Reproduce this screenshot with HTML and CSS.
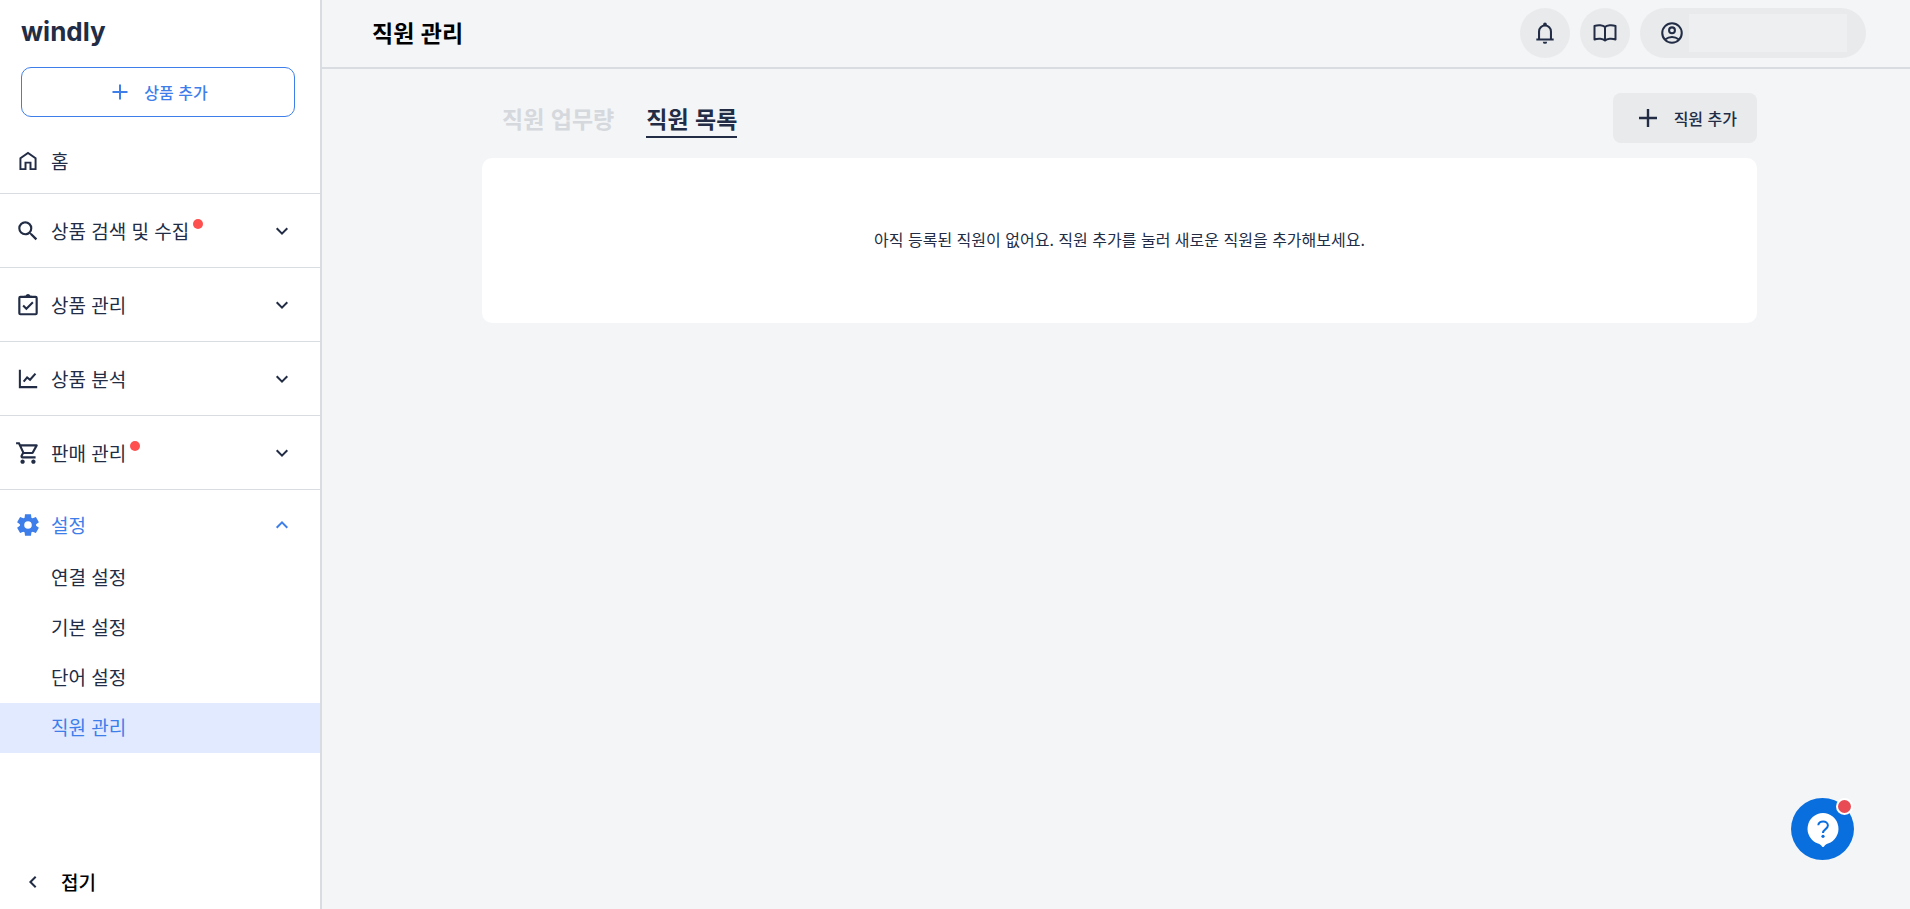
FILE: index.html
```html
<!DOCTYPE html>
<html lang="ko">
<head>
    <meta charset="utf-8">
    <meta name="viewport" content="width=device-width, initial-scale=1">
    <title>직원 관리</title>
    <link rel="stylesheet" href="styles.css">
</head>
<body>
<aside class="sidebar">
    <a class="logo" href="#">windly</a>
    <button class="add-product">
        <svg width="24" height="24" viewBox="0 0 24 24"><path d="M12 4.500v15M4.500 12h15" stroke="currentColor" stroke-width="2" fill="none"/></svg>
        상품 추가
    </button>
    <nav class="menu">
        <a class="menu-item home" href="#">
            <svg class="icon" viewBox="0 0 24 24"><path d="M5 19.500V9.500L12 4.500l7 5v10h-4.700v-6H9.700v6z" stroke="currentColor" stroke-width="1.800" fill="none"/></svg>
            홈
        </a>
        <button class="menu-item">
            <svg class="icon" viewBox="0 0 24 24"><path fill="currentColor" d="M15.500 14h-.79l-.28-.27A6.471 6.471 0 0 0 16 9.500 6.500 6.500 0 1 0 9.500 16c1.610 0 3.090-.59 4.230-1.570l.27.28v.79l5 4.990L20.490 19l-4.990-5zm-6 0C7.010 14 5 11.990 5 9.500S7.010 5 9.500 5 14 7.010 14 9.500 11.990 14 9.500 14z"/></svg>
            <span class="label">상품 검색 및 수집<i class="dot"></i></span>
            <svg class="chevron" viewBox="0 0 24 24"><path d="M6.700 9.300l5.300 5.300 5.300-5.300"/></svg>
        </button>
        <button class="menu-item">
            <svg class="icon" viewBox="0 0 24 24"><rect x="4" y="4.500" width="16" height="16" rx="1" stroke="currentColor" stroke-width="2" fill="none"/><path d="M8.500 5.500V3.500h1.300a2.300 2.300 0 0 1 4.400 0h1.300v2z" fill="currentColor"/><path d="M7.500 12.500l3 3 6-6" stroke="currentColor" stroke-width="1.900" fill="none"/></svg>
            <span class="label">상품 관리</span>
            <svg class="chevron" viewBox="0 0 24 24"><path d="M6.700 9.300l5.300 5.300 5.300-5.300"/></svg>
        </button>
        <button class="menu-item">
            <svg class="icon" viewBox="0 0 24 24"><path d="M4.500 3.500v16H20.500M8 14.500l3.200-4 2.700 2.200 5-5.700" stroke="currentColor" stroke-width="1.900" fill="none"/></svg>
            <span class="label">상품 분석</span>
            <svg class="chevron" viewBox="0 0 24 24"><path d="M6.700 9.300l5.300 5.300 5.300-5.300"/></svg>
        </button>
        <button class="menu-item">
            <svg class="icon" viewBox="0 0 24 24"><path fill="currentColor" d="M15.550 13c.75 0 1.410-.41 1.750-1.030l3.580-6.490A.996.996 0 0 0 20.010 4H5.210l-.94-2H1v2h2l3.600 7.590-1.350 2.440C4.520 15.370 5.480 17 7 17h12v-2H7l1.100-2h7.450zM6.160 6h12.150l-2.760 5H8.530L6.160 6zM7 18c-1.100 0-1.990.9-1.990 2S5.900 22 7 22s2-.9 2-2-.9-2-2-2zm10 0c-1.100 0-1.990.9-1.990 2s.89 2 1.990 2 2-.9 2-2-.9-2-2-2z"/></svg>
            <span class="label">판매 관리<i class="dot"></i></span>
            <svg class="chevron" viewBox="0 0 24 24"><path d="M6.700 9.300l5.300 5.300 5.300-5.300"/></svg>
        </button>
        <button class="menu-item open">
            <svg class="icon" viewBox="0 0 24 24"><path fill="currentColor" d="M9.250 22l-.4-3.200q-.325-.125-.612-.3t-.563-.375L4.700 19.375l-2.750-4.750 2.575-1.950Q4.500 12.500 4.500 12.338v-.675q0-.163.025-.338L1.950 9.375l2.750-4.750 2.975 1.250q.275-.2.575-.375t.6-.3l.4-3.200h5.500l.4 3.200q.325.125.613.300t.562.375l2.975-1.250 2.750 4.750-2.575 1.950q.025.175.025.338v.675q0 .162-.05.337l2.575 1.950-2.750 4.750-2.950-1.250q-.275.2-.575.375t-.6.300l-.4 3.200zM12 15.500a3.500 3.500 0 1 0 0-7 3.500 3.500 0 0 0 0 7z"/></svg>
            <span class="label">설정</span>
            <svg class="chevron" viewBox="0 0 24 24"><path d="M6.700 14.700L12 9.400l5.300 5.300"/></svg>
        </button>
        <div class="submenu">
            <a href="#">연결 설정</a>
            <a href="#">기본 설정</a>
            <a href="#">단어 설정</a>
            <a href="#" class="active">직원 관리</a>
        </div>
    </nav>
    <button class="fold">
        <svg class="chevron" viewBox="0 0 24 24"><path d="M14.700 6.700L9.400 12l5.300 5.300"/></svg>
        접기
    </button>
</aside>
<div class="page">
    <header class="topbar">
        <h1>직원 관리</h1>
        <div class="topbar-actions">
            <button class="round" aria-label="알림">
                <svg width="26" height="26" viewBox="0 0 24 24"><path d="M4 18h16M6.500 18v-7.500a5.500 5.500 0 0 1 11 0V18" stroke="currentColor" stroke-width="1.900" fill="none"/><path fill="currentColor" d="M10.300 5.500V4a1.700 1.700 0 0 1 3.400 0v1.500zM10 20h4a2 2 0 0 1-4 0z"/></svg>
            </button>
            <button class="round" aria-label="가이드">
                <svg width="26" height="26" viewBox="0 0 26 26"><path d="M13 7C11 5 6 4.700 2.500 6v13.500C6 18.200 11 18.500 13 20.500c2-2 7-2.300 10.500-1V6C20 4.700 15 5 13 7zv13.500" stroke="currentColor" stroke-width="2" stroke-linejoin="round" fill="none"/></svg>
            </button>
            <button class="account" aria-label="내 계정">
                <svg width="26" height="26" viewBox="0 0 24 24"><g stroke="currentColor" stroke-width="1.900" fill="none"><circle cx="12" cy="12" r="9"/><circle cx="12" cy="9.500" r="2.700"/><path d="M5.500 18q6.500-4.600 13 0"/></g></svg>
                <span class="account-name"></span>
            </button>
        </div>
    </header>
    <main class="content">
        <div class="content-head">
            <div class="tabs">
                <a class="tab" href="#">직원 업무량</a>
                <a class="tab selected" href="#">직원 목록</a>
            </div>
            <button class="add-staff">
                <svg width="24" height="24" viewBox="0 0 24 24"><path d="M12 3v18M3 12h18" stroke="currentColor" stroke-width="2.400" fill="none"/></svg>
                직원 추가
            </button>
        </div>
        <section class="card">
            <p>아직 등록된 직원이 없어요. 직원 추가를 눌러 새로운 직원을 추가해보세요.</p>
        </section>
    </main>
</div>
<button class="help" aria-label="도움말">
    <svg width="36" height="40" viewBox="0 0 36 40"><path fill="#fff" d="M18 4a15.700 15.700 0 0 1 5 30.500c-2 .7-3 1.700-4 3q-1 1.200-2 0c-1-1.300-2-2.300-4-3A15.700 15.700 0 0 1 18 4z"/><path d="M13.300 16.300c.2-5.200 9.600-5.300 9.600.2 0 3.700-4.900 3.500-4.900 7.600" stroke="#0a6fde" stroke-width="2" fill="none"/><circle cx="18" cy="27.300" r="1.600" fill="#0a6fde"/></svg>
    <i class="help-badge"></i>
</button>
</body>
</html>
```

FILE: styles.css
```css
:root {
    --navy: #222d45;
    --blue: #3d7eea;
    --line: #d9dce0;
    --gray: #e8eaec;
    --bg: #f3f5f7;
    --red: #ff5050;
}

* {
    box-sizing: border-box;
}

body {
    margin: 0;
    min-height: 100vh;
    display: flex;
    background: var(--bg);
    color: var(--navy);
    font-family: "Noto Sans CJK KR", "Noto Sans", sans-serif;
    font-size: 16px;
    line-height: 24px;
}

button {
    font: inherit;
    color: inherit;
    border: 0;
    background: none;
    padding: 0;
    cursor: pointer;
}

a {
    color: inherit;
    text-decoration: none;
}

svg {
    display: block;
    flex: none;
}

.sidebar {
    width: 322px;
    min-height: 100vh;
    flex: none;
    display: flex;
    flex-direction: column;
    background: #fff;
    border-right: 2px solid var(--line);
}

.logo {
    margin: 16px 21px 0;
    font-family: Inter, sans-serif;
    font-size: 26px;
    font-weight: 700;
    line-height: 32px;
}

.add-product {
    display: flex;
    align-items: center;
    justify-content: center;
    gap: 12px;
    height: 50px;
    margin: 19px 25px 0 21px;
    padding-bottom: 1px;
    border: 1px solid var(--blue);
    border-radius: 10px;
    color: var(--blue);
    font-weight: 500;
}

.menu {
    display: flex;
    flex-direction: column;
    margin-top: 7px;
    font-size: 19px;
}

.menu-item {
    display: flex;
    align-items: center;
    gap: 10px;
    height: 74px;
    padding: 0 26px 0 15px;
    border-bottom: 1px solid var(--line);
    text-align: left;
}

.menu-item.home {
    height: 70px;
    padding-top: 4px;
}

.menu-item.open {
    height: 63px;
    padding-top: 7px;
    border-bottom: 0;
    color: var(--blue);
}

.label {
    flex: 1;
    display: flex;
    gap: 4px;
}

.icon {
    width: 26px;
    height: 26px;
}

.dot {
    width: 10px;
    height: 10px;
    border-radius: 50%;
    background: var(--red);
}

.chevron {
    width: 24px;
    height: 24px;
    fill: none;
    stroke: currentColor;
    stroke-width: 2;
}

.submenu a {
    display: block;
    padding: 0 0 2px 51px;
    line-height: 48px;
}

.submenu .active {
    background: #e1eafe;
    color: var(--blue);
}

.fold {
    display: flex;
    align-items: center;
    gap: 16px;
    height: 54px;
    margin-top: auto;
    padding-left: 21px;
    color: #000;
    font-size: 19px;
    font-weight: 500;
}

.fold .chevron {
    color: var(--navy);
}

.page {
    flex: 1;
    min-width: 0;
}

.topbar {
    display: flex;
    align-items: center;
    justify-content: space-between;
    height: 69px;
    padding: 0 44px 2px 50px;
    border-bottom: 2px solid var(--line);
}

.topbar h1 {
    margin: 0;
    padding-bottom: 2px;
    color: #000;
    font-size: 23px;
    font-weight: 700;
}

.topbar-actions {
    display: flex;
    gap: 10px;
}

.topbar-actions button {
    display: flex;
    align-items: center;
    height: 50px;
    border-radius: 25px;
    background: var(--gray);
}

.topbar-actions .round {
    width: 50px;
    justify-content: center;
}

.topbar-actions .account {
    width: 226px;
    gap: 4px;
    padding: 0 19px;
}

.account-name {
    flex: 1;
    height: 38px;
    background: #eeeff0;
}

.content {
    padding: 24px 153px 24px 160px;
}

.content-head {
    display: flex;
    align-items: center;
    justify-content: space-between;
    margin-bottom: 15px;
}

.tabs {
    display: flex;
    gap: 32px;
    padding-left: 20px;
    font-size: 23px;
    font-weight: 700;
}

.tab {
    padding: 6px 0 4px;
    line-height: 28px;
    color: #d5d8dc;
    border-bottom: 2px solid transparent;
}

.tab.selected {
    color: var(--navy);
    border-color: var(--navy);
}

.add-staff {
    display: flex;
    align-items: center;
    gap: 14px;
    height: 50px;
    padding: 0 20px 1px 23px;
    border-radius: 8px;
    background: var(--gray);
    font-weight: 500;
}

.card {
    padding: 69px 24px 72px;
    border-radius: 10px;
    background: #fff;
    text-align: center;
}

.card p {
    margin: 0;
}

.help {
    position: fixed;
    right: 56px;
    bottom: 49px;
    width: 63px;
    height: 62px;
    display: flex;
    align-items: center;
    justify-content: center;
    border-radius: 50%;
    background: #0a6fde;
}

.help-badge {
    position: absolute;
    top: 0;
    right: 1px;
    width: 17px;
    height: 17px;
    border: 2px solid #fff;
    border-radius: 50%;
    background: #e94b55;
}
```
